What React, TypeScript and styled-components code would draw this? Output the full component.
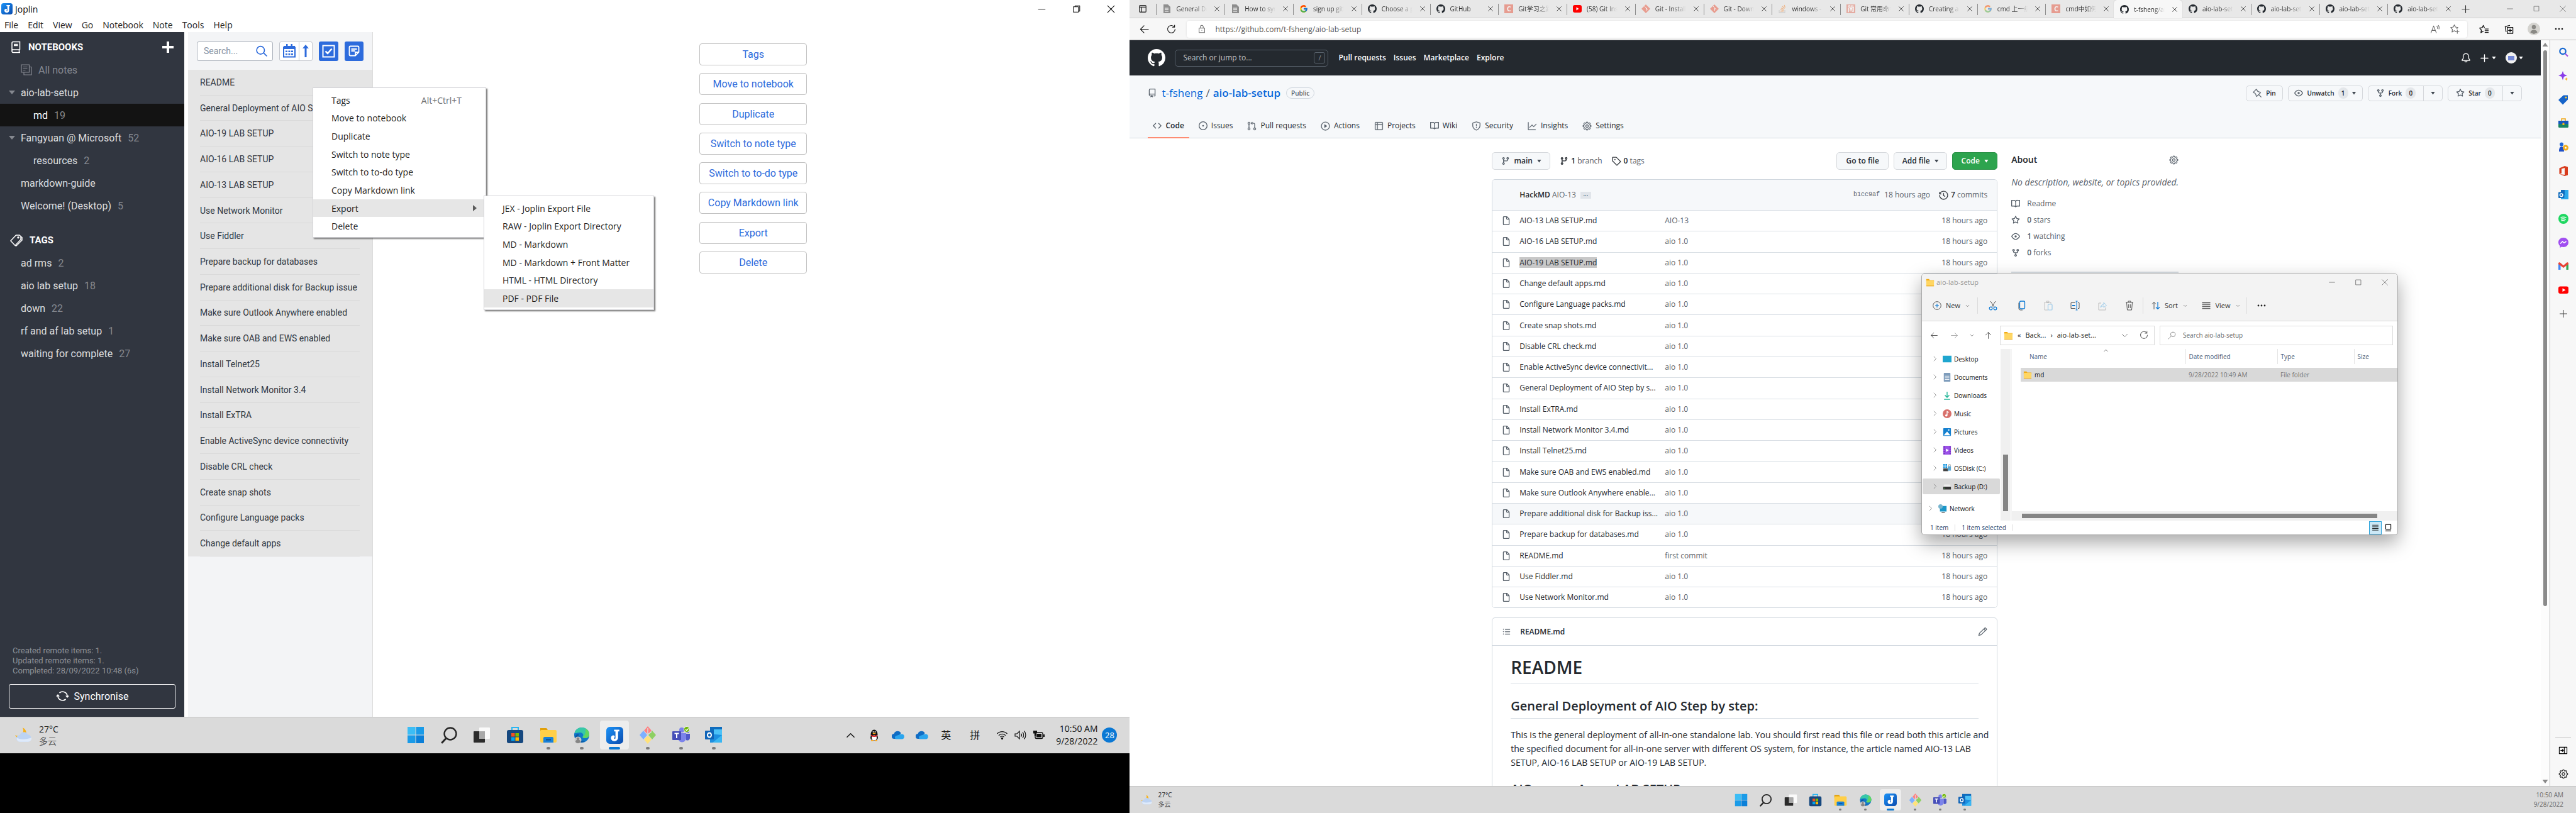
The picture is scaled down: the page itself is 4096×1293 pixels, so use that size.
import React from 'react';
import styled, { createGlobalStyle, css } from 'styled-components';
import {
  GoPin, GoGear, GoTable, GoShield, GoGraph, GoHistory, GoTag, GoPencil, GoListUnordered, GoBell, GoPlay, GoGitPullRequest,
} from 'react-icons/go';
import { FcGoogle } from 'react-icons/fc';

const ui = '"Open Sans", "Noto Sans", "Noto Sans CJK SC", sans-serif';
const roboto = 'Roboto, "Noto Sans CJK SC", sans-serif';

const Global = createGlobalStyle`
  * { box-sizing: border-box; }
  body { margin: 0; background: #000; font-family: ${ui}; }
  button, input { font: inherit; color: inherit; margin: 0; }
  button { border: 0; padding: 0; background: none; }
  a { color: inherit; text-decoration: none; }
  ul, h1, h2, h3, p { margin: 0; padding: 0; list-style: none; }
  svg { display: block; flex: none; }
`;

/* ---------- shared ---------- */

const Screens = styled.div`
  display: grid;
  grid-template-columns: 3000fr 3840fr;
  height: 100vh;
  overflow: hidden;
`;
const LeftScreen = styled.section`
  position: relative;
  aspect-ratio: 3 / 2;
  display: flex;
  flex-direction: column;
  background: #fff;
  min-width: 0;
`;
const RightScreen = styled.section`
  position: relative;
  height: 100vh;
  display: flex;
  flex-direction: column;
  background: #fff;
  min-width: 0;
`;
const Line = ({ d, size = 16, box = 16, w = 1.2, color = 'currentColor' }: { d: string; size?: number; box?: number; w?: number; color?: string }) => (
  <svg width={size} height={size} viewBox={`0 0 ${box} ${box}`} fill="none" stroke={color} strokeWidth={w} strokeLinecap="round" strokeLinejoin="round"><path d={d} /></svg>
);
const Solid = ({ d, size = 14 }: { d: string; size?: number }) => (
  <svg width={size} height={size} viewBox="0 0 16 16" fill="currentColor"><path fillRule="evenodd" d={d} /></svg>
);
const paths = {
  github: 'M8 0C3.58 0 0 3.58 0 8c0 3.54 2.29 6.53 5.47 7.59.4.07.55-.17.55-.38 0-.19-.01-.82-.01-1.49-2.01.37-2.53-.49-2.69-.94-.09-.23-.48-.94-.82-1.13-.28-.15-.68-.52-.01-.53.63-.01 1.08.58 1.23.82.72 1.21 1.87.87 2.33.66.07-.52.28-.87.51-1.07-1.78-.2-3.64-.89-3.64-3.95 0-.87.31-1.59.82-2.15-.08-.2-.36-1.02.08-2.12 0 0 .67-.21 2.2.82.64-.18 1.32-.27 2-.27.68 0 1.36.09 2 .27 1.53-1.04 2.2-.82 2.2-.82.44 1.1.16 1.92.08 2.12.51.56.82 1.27.82 2.15 0 3.07-1.87 3.75-3.65 3.95.29.25.54.73.54 1.48 0 1.07-.01 1.93-.01 2.2 0 .21.15.46.55.38A8.013 8.013 0 0016 8c0-4.42-3.58-8-8-8z',
  repo: 'M2 2.5A2.5 2.5 0 014.5 0h8.75a.75.75 0 01.75.75v12.5a.75.75 0 01-.75.75h-2.5a.75.75 0 110-1.5h1.75v-2h-8a1 1 0 00-.714 1.7.75.75 0 01-1.072 1.05A2.495 2.495 0 012 11.5v-9zm10.5-1V9h-8c-.356 0-.694.074-1 .208V2.5a1 1 0 011-1h8zM5 12.25v3.25a.25.25 0 00.4.2l1.45-1.087a.25.25 0 01.3 0L8.6 15.7a.25.25 0 00.4-.2v-3.25a.25.25 0 00-.25-.25h-3.5a.25.25 0 00-.25.25z',
  code: 'M4.72 3.22a.75.75 0 011.06 1.06L2.06 8l3.72 3.72a.75.75 0 11-1.06 1.06L.47 8.53a.75.75 0 010-1.06l4.25-4.25zm6.56 0a.75.75 0 10-1.06 1.06L13.94 8l-3.72 3.72a.75.75 0 101.06 1.06l4.25-4.25a.75.75 0 000-1.06l-4.25-4.25z',
  issue: 'M8 9.5a1.5 1.5 0 100-3 1.5 1.5 0 000 3zM8 0a8 8 0 100 16A8 8 0 008 0zM1.5 8a6.5 6.5 0 1113 0 6.5 6.5 0 01-13 0z',
  branch: 'M11.75 2.5a.75.75 0 100 1.5.75.75 0 000-1.5zm-2.25.75a2.25 2.25 0 113 2.122V6A2.5 2.5 0 0110 8.5H6a1 1 0 00-1 1v1.128a2.251 2.251 0 11-1.5 0V5.372a2.25 2.25 0 111.5 0v1.836A2.492 2.492 0 016 7h4a1 1 0 001-1v-.628A2.25 2.25 0 019.5 3.25zM4.25 12a.75.75 0 100 1.5.75.75 0 000-1.5zM3.5 3.25a.75.75 0 111.5 0 .75.75 0 01-1.5 0z',
  file: 'M3.75 1.5a.25.25 0 00-.25.25v12.5c0 .138.112.25.25.25h8.5a.25.25 0 00.25-.25V6H9.75A1.75 1.75 0 018 4.25V1.5H3.75zm5.75.56v2.19c0 .138.112.25.25.25h2.19L9.5 2.06zM2 1.75C2 .784 2.784 0 3.75 0h5.086c.464 0 .909.184 1.237.513l3.414 3.414c.329.328.513.773.513 1.237v9.086A1.75 1.75 0 0112.25 16h-8.5A1.75 1.75 0 012 14.25V1.75z',
  star: 'M8 .25a.75.75 0 01.673.418l1.882 3.815 4.21.612a.75.75 0 01.416 1.279l-3.046 2.97.719 4.192a.75.75 0 01-1.088.791L8 12.347l-3.766 1.98a.75.75 0 01-1.088-.79l.72-4.194L.818 6.374a.75.75 0 01.416-1.28l4.21-.611L7.327.668A.75.75 0 018 .25zm0 2.445L6.615 5.5a.75.75 0 01-.564.41l-3.097.45 2.24 2.184a.75.75 0 01.216.664l-.528 3.084 2.769-1.456a.75.75 0 01.698 0l2.77 1.456-.53-3.084a.75.75 0 01.216-.664l2.24-2.183-3.096-.45a.75.75 0 01-.564-.41L8 2.694v.001z',
  fork: 'M5 3.25a.75.75 0 11-1.5 0 .75.75 0 011.5 0zm0 2.122a2.25 2.25 0 10-1.5 0v.878A2.25 2.25 0 005.75 8.5h1.5v2.128a2.251 2.251 0 101.5 0V8.5h1.5a2.25 2.25 0 002.25-2.25v-.878a2.25 2.25 0 10-1.5 0v.878a.75.75 0 01-.75.75h-4.5A.75.75 0 015 6.25v-.878zm3.75 7.378a.75.75 0 11-1.5 0 .75.75 0 011.5 0zm3-8.75a.75.75 0 100-1.5.75.75 0 000 1.5z',
  eye: 'M1.679 7.932c.412-.621 1.242-1.75 2.366-2.717C5.175 4.242 6.527 3.5 8 3.5c1.473 0 2.824.742 3.955 1.715 1.124.967 1.954 2.096 2.366 2.717a.119.119 0 010 .136c-.412.621-1.242 1.75-2.366 2.717C10.825 11.758 9.473 12.5 8 12.5c-1.473 0-2.824-.742-3.955-1.715C2.92 9.818 2.09 8.69 1.679 8.068a.119.119 0 010-.136zM8 2c-1.981 0-3.67.992-4.933 2.078C1.797 5.169.88 6.423.43 7.1a1.619 1.619 0 000 1.798c.45.678 1.367 1.932 2.637 3.024C4.329 13.008 6.019 14 8 14c1.981 0 3.67-.992 4.933-2.078 1.27-1.091 2.187-2.345 2.637-3.023a1.619 1.619 0 000-1.798c-.45-.678-1.367-1.932-2.637-3.023C11.671 2.992 9.981 2 8 2zm0 8a2 2 0 100-4 2 2 0 000 4z',
  book: 'M0 1.75A.75.75 0 01.75 1h4.253c1.227 0 2.317.59 3 1.501A3.744 3.744 0 0111.006 1h4.245a.75.75 0 01.75.75v10.5a.75.75 0 01-.75.75h-4.507a2.25 2.25 0 00-1.591.659l-.622.621a.75.75 0 01-1.06 0l-.622-.621A2.25 2.25 0 005.258 13H.75a.75.75 0 01-.75-.75V1.75zm8.755 3a2.25 2.25 0 012.25-2.25H14.5v9h-3.757c-.71 0-1.4.201-1.992.572l.004-7.322zm-1.504 7.324l.004-5.073-.002-2.253A2.25 2.25 0 005.003 2.5H1.5v9h3.757a3.75 3.75 0 011.994.574z',
};
const go = { size: 15, stroke: 'currentColor', strokeWidth: 0.5 };

const JoplinLogo = ({ size }: { size: number }) => (
  <svg width={size} height={size} viewBox="0 0 24 24">
    <defs><linearGradient id="jop" x1="0" y1="0" x2="1" y2="1"><stop offset="0" stopColor="#1c93f7" /><stop offset="1" stopColor="#0a4bae" /></linearGradient></defs>
    <rect width="24" height="24" rx="5" fill="url(#jop)" />
    <path d="M11 4h7.500v2.400h-1.800v8.800c0 3.100-2.200 5-5.100 5-2.900 0-5-1.800-5-4.400 0-2.200 1.400-3.800 3.400-3.800 1.300 0 2 .8 2 1.800 0 1.200-.9 1.400-.9 2.200 0 .6.400 1 .9 1 .7 0 1-.5 1-1.500V6.400H11z" fill="#fff" />
  </svg>
);
const FolderIcon = ({ size = 14 }: { size?: number }) => (
  <svg width={size} height={size} viewBox="0 0 16 16"><path d="M1 2h5l1.500 2H15v3H1z" fill="#f2ab12" /><rect x="1" y="4.500" width="14" height="10.500" rx=".8" fill="#ffd663" /><path d="M1 14h14v1H1z" fill="#e9a31b" /></svg>
);

/* ---------- taskbar ---------- */

const Bar = styled.footer<{ $small?: boolean }>`
  display: grid;
  grid-template-columns: 1fr auto 1fr;
  align-items: center;
  flex: none;
  height: ${p => (p.$small ? 43 : 58)}px;
  background: #dadada;
  border-top: 1px solid #c6c6c6;
`;
const Weather = styled.div<{ $small?: boolean }>`
  display: flex;
  align-items: center;
  gap: ${p => (p.$small ? 8 : 10)}px;
  padding-left: ${p => (p.$small ? 17 : 22)}px;
  font-size: ${p => (p.$small ? 10 : 14)}px;
  line-height: ${p => (p.$small ? 15 : 19)}px;
  color: #222;
  span + span { color: #555; }
  span { display: block; }
`;
const Apps = styled.div<{ $small?: boolean }>`
  display: grid;
  grid-template-columns: repeat(10, 1fr);
  width: ${p => (p.$small ? 396 : 527)}px;
`;
const AppButton = styled.button<{ $small?: boolean; $active?: boolean }>`
  position: relative;
  justify-self: center;
  display: grid;
  place-items: center;
  width: ${p => (p.$small ? 34 : 46)}px;
  height: ${p => (p.$small ? 34 : 46)}px;
  border-radius: 4px;
  background: ${p => (p.$active ? '#ededed' : 'transparent')};
`;
const RunMark = styled.i<{ $active?: boolean; $small?: boolean }>`
  position: absolute;
  bottom: 0;
  left: 50%;
  width: ${p => (p.$active ? (p.$small ? 12 : 18) : p.$small ? 4 : 6)}px;
  height: ${p => (p.$small ? 3 : 4)}px;
  transform: translateX(-50%);
  border-radius: 2px;
  background: ${p => (p.$active ? '#0a78d4' : '#7b7b7b')};
`;
const Tray = styled.div`
  display: flex;
  justify-content: flex-end;
  align-items: center;
  padding-right: 20px;
  color: #111;
`;
const TrayCell = styled.span<{ $w: number }>`
  display: grid;
  place-items: center;
  width: ${p => p.$w}px;
  font-size: 16px;
  line-height: 20px;
`;
const Clock = styled.time<{ $small?: boolean }>`
  font-size: ${p => (p.$small ? 10 : 14)}px;
  line-height: ${p => (p.$small ? 15 : 20)}px;
  text-align: right;
  padding: ${p => (p.$small ? '0' : '0 7px 0 12px')};
  color: ${p => (p.$small ? '#6b6b6b' : '#111')};
  span { display: block; }
`;
const Badge = styled.span`
  width: 24px;
  height: 24px;
  border-radius: 50%;
  background: #0a78d4;
  color: #fff;
  font-size: 13px;
  line-height: 24px;
  text-align: center;
`;

const CloudMoon = ({ size }: { size: number }) => (
  <svg width={size} height={size} viewBox="0 0 28 28"><path d="M13 3a8 8 0 01-11 11 8.500 8.500 0 1011-11z" fill="#f6b21b" /><path d="M9 24a5 5 0 01-.3-10 6.500 6.500 0 0112-.6A5.400 5.400 0 0121.500 24z" fill="#bcd3f3" /><path d="M9 24a5 5 0 01-4.700-6c4 3 14 3 22 0a5.300 5.300 0 01-4.800 6z" fill="#dfeafa" /></svg>
);
const Edge = () => (<>
  <circle cx="14" cy="14" r="12" fill="#1178c8" />
  <path d="M2.500 11C4 5 9 2 14 2c7 0 12 5 12 10.500 0 4-3 6.500-6.500 6.500-3 0-5-1-4-2.500 2-2.500.5-6.500-4-6.500-4 0-7 1.500-9 1z" fill="#37c8a8" />
  <path d="M20 4c4 2 6 5.500 6 8.500 0 4-3 6.500-6.500 6.500-2.500 0-4.200-.8-4-2 3-1 5-6 4.500-13z" fill="#62d65f" />
  <path d="M9 14c-1 6 4 10 10 10-5 3.500-12 2-15-3-2-4 0-9 6-9-1 .8-1 1.200-1 2z" fill="#0c5aa6" />
</>);
const appDrawings: [string, React.ReactNode, boolean?][] = [
  ['Start', <g fill="#1a9be8"><path d="M1 1h12.500v12.500H1z" fill="#3cbdf5" /><path d="M14.500 1H27v12.500H14.500z" /><path d="M1 14.500h12.500V27H1z" /><path d="M14.500 14.500H27V27H14.500z" fill="#0b7fd8" /></g>],
  ['Search', <g fill="none" stroke="#262626" strokeWidth="2.400"><circle cx="16" cy="12" r="9.500" /><path d="M9.500 19L3 26" strokeWidth="3" strokeLinecap="round" /></g>],
  ['Task view', <g><rect x="10" y="2" width="17" height="18" rx="1" fill="#fafafa" /><rect x="1" y="8" width="18" height="18" rx="1" fill="#2b2b2b" /><path d="M10 8h9v12h-9z" fill="#a9a9a9" /></g>],
  ['Store', <g><path d="M9 7V2h10v5" fill="none" stroke="#29b6f2" strokeWidth="2" /><rect x="1" y="6" width="26" height="21" rx="3" fill="#16487f" /><path d="M8 11h5.500v5.500H8z" fill="#f25022" /><path d="M14.500 11H20v5.500h-5.500z" fill="#7fba00" /><path d="M8 17.500h5.500V23H8z" fill="#00a4ef" /><path d="M14.500 17.500H20V23h-5.500z" fill="#ffb900" /></g>],
  ['File Explorer', <g><path d="M1 3h10l2 3v4H1z" fill="#e2a008" /><rect x="1" y="6" width="26" height="20" rx="2" fill="#ffcf48" /><path d="M6 26v-7q0-2 2-2h12q2 0 2 2v7z" fill="#1881d8" /><path d="M10 21.500h8" stroke="#0c4f93" strokeWidth="2" /></g>, true],
  ['Edge', <g><Edge /><circle cx="8" cy="22" r="5.500" fill="#c9c9c9" /><circle cx="8" cy="20" r="2.300" fill="#858585" /><path d="M4 25a4 3.500 0 018 0 5 5 0 01-8 0z" fill="#858585" /></g>, true],
  ['Joplin', null, true],
  ['Fork', <g><path d="M14 0l6 7-6 6-6-6z" fill="#ff8080" /><path d="M1 14l6-7 6 7-6 7z" fill="#7db0ff" /><path d="M27 14l-6-7-6 7 6 7z" fill="#8ed062" /><path d="M14 28l6-7-6-6-6 6z" fill="#ffe27a" /><path d="M14 3v13M14 13l6-4" stroke="#dadada" strokeWidth="1.500" /></g>, true],
  ['Teams', <g><circle cx="15" cy="6" r="4" fill="#7b83eb" /><circle cx="24" cy="8" r="3" fill="#5059c9" /><path d="M9 11h13v8a6.500 6.500 0 01-13 0z" fill="#7b83eb" /><path d="M22 12h6v7a4 4 0 01-6 3z" fill="#5059c9" /><rect x="0" y="8" width="14" height="14" rx="1" fill="#464eb8" /><path d="M3.500 11.500h7M7 11.500v7.500" stroke="#fff" strokeWidth="2" /><circle cx="23" cy="5" r="4.500" fill="#6bb700" stroke="#eee" strokeWidth="1" /><path d="M21 5l1.700 1.700 3-3.200" stroke="#fff" strokeWidth="1.300" fill="none" /></g>, true],
  ['Outlook', <g><path d="M8 1h19v13H8z" fill="#0f6cbd" /><path d="M14 5h13v9H14z" fill="#4cc2f7" /><path d="M8 12l19 2v12H8z" fill="#1d8fe0" /><path d="M27 14v12H12z" fill="#39b6f2" /><rect x="0" y="7" width="14" height="14" rx="1" fill="#0f64b8" /><ellipse cx="7" cy="14" rx="3" ry="3.500" stroke="#fff" strokeWidth="2" fill="none" /></g>, true],
];
const Taskbar = ({ small }: { small?: boolean }) => (
  <Bar $small={small}>
    <Weather $small={small}>
      <CloudMoon size={small ? 20 : 30} />
      <div><span>27°C</span><span>多云</span></div>
    </Weather>
    <Apps $small={small}>
      {appDrawings.map(([name, art, run]) => (
        <AppButton key={name} aria-label={name} $small={small} $active={name === 'Joplin'}>
          {art ? <svg width={small ? 21 : 28} height={small ? 21 : 28} viewBox="0 0 28 28">{art}</svg> : <JoplinLogo size={small ? 20 : 27} />}
          {run && <RunMark $small={small} $active={name === 'Joplin'} />}
        </AppButton>
      ))}
    </Apps>
    <Tray>
      {!small && (
        <>
          <TrayCell $w={38}><Line d="M2 11l6-6 6 6" size={15} w={1.5} /></TrayCell>
          <TrayCell $w={38}>
            <svg width="18" height="19" viewBox="0 0 18 19"><ellipse cx="9" cy="8" rx="5.500" ry="7.500" fill="#111" /><ellipse cx="9" cy="13" rx="6" ry="5" fill="#111" /><ellipse cx="9" cy="13.500" rx="4" ry="4" fill="#fff" /><path d="M4 8.500q5 3 10 0v2q-5 3-10 0z" fill="#e81c25" /><ellipse cx="9" cy="6.500" rx="2.500" ry="1" fill="#fba61a" /><circle cx="7.500" cy="4" r="1" fill="#fff" /><circle cx="10.500" cy="4" r="1" fill="#fff" /><path d="M4 17h4v1.500H4zM10 17h4v1.500h-4z" fill="#fba61a" /></svg>
          </TrayCell>
          {[0, 1].map(i => (
            <TrayCell $w={38} key={i}><svg width="20" height="14" viewBox="0 0 20 14"><path d="M4 13a4 4 0 01-.5-8A6 6 0 0114.500 4L8 13z" fill="#0f6cc4" /><path d="M6 13.500a4 4 0 010-5l6-2a5 5 0 013.500-1A4 4 0 0116 13.500z" fill="#2aa5ee" /></svg></TrayCell>
          ))}
          <TrayCell $w={38}>英</TrayCell>
          <TrayCell $w={54}>拼</TrayCell>
          <TrayCell $w={32}><svg width="19" height="16" viewBox="0 0 19 16" fill="none" stroke="#111" strokeWidth="1.300"><path d="M1.500 6a11 11 0 0116 0M4 8.800a7.500 7.500 0 0111 0M6.500 11.300a4 4 0 016 0" /><circle cx="9.500" cy="13.500" r="1" fill="#111" /></svg></TrayCell>
          <TrayCell $w={28}><svg width="20" height="16" viewBox="0 0 20 16" fill="none" stroke="#111" strokeWidth="1.200"><path d="M1 6h3l4-4v12l-4-4H1zM10.500 5.500a4 4 0 010 5M13 3.500a7 7 0 010 9M15.500 1.500a10 10 0 010 13" /></svg></TrayCell>
          <TrayCell $w={30}><svg width="20" height="16" viewBox="0 0 20 16"><rect x="4" y="4" width="12" height="9.500" rx="2" fill="none" stroke="#111" strokeWidth="1.300" /><path d="M6 6h8v5.500H6zM17 7h2v4h-2zM1 1h6v4.500H5.200V9H2.800V5.500H1z" fill="#111" /></svg></TrayCell>
        </>
      )}
      <Clock $small={small}><span>10:50 AM</span><span>9/28/2022</span></Clock>
      {!small && <Badge>28</Badge>}
    </Tray>
  </Bar>
);

/* ---------- Joplin ---------- */

const TitleRow = styled.header`
  display: flex;
  align-items: center;
  height: 28px;
  padding: 0 4px 0 2px;
  gap: 4px;
  font-size: 14px;
  color: #111;
`;
const Spacer = styled.span`flex: 1;`;
const WinButton = styled.button<{ $w: number; $color?: string }>`
  display: grid;
  place-items: center;
  width: ${p => p.$w}px;
  height: 100%;
  color: ${p => p.$color || '#111'};
`;
const winPaths = ['M3 8h10', 'M3.500 4.500h7.500v8h-7.500zM6 4.500V3h7v8h-2', 'M3 3l10 10M13 3L3 13'];
const MenuRow = styled.nav`
  display: flex;
  height: 23px;
  padding-left: 7px;
  gap: 15px;
  font-size: 14px;
  line-height: 21px;
  color: #222;
`;
const JoplinBody = styled.div`
  flex: 1;
  min-height: 0;
  display: grid;
  grid-template-columns: 293px 294px 1fr;
  column-gap: 6px;
  background: #fff;
  font-family: ${roboto};
`;
const Side = styled.aside`
  display: flex;
  flex-direction: column;
  background: #313640;
  color: #dcdddf;
  font-size: 16px;
`;
const SideHead = styled.div<{ $top: number }>`
  display: flex;
  align-items: center;
  gap: 11px;
  height: 36px;
  margin-top: ${p => p.$top}px;
  padding: 0 16px;
  color: #fff;
  font-weight: 700;
  font-size: 15px;
  button { margin-left: auto; }
`;
const SideRow = styled.a<{ $in?: boolean; $on?: boolean; $dim?: boolean }>`
  display: flex;
  align-items: center;
  gap: 10px;
  height: 36px;
  padding-left: ${p => (p.$in ? 53 : 14)}px;
  background: ${p => (p.$on ? '#131313' : 'transparent')};
  color: ${p => (p.$dim ? '#858890' : p.$on ? '#fff' : '#dcdddf')};
  small { font-size: 16px; color: #85888f; }
`;
const Twist = styled.i<{ $open?: boolean }>`
  width: 10px;
  height: 6px;
  margin-right: -1px;
  background: ${p => (p.$open ? '#85888f' : 'transparent')};
  clip-path: polygon(0 0, 100% 0, 50% 100%);
`;
const SyncText = styled.p`
  margin: auto 0 13px 20px;
  font-size: 13px;
  line-height: 16px;
  color: #8f9298;
`;
const SyncButton = styled.button`
  display: flex;
  align-items: center;
  justify-content: center;
  gap: 8px;
  height: 39px;
  margin: 0 14px 13px;
  border: 1px solid #fff;
  border-radius: 3px;
  color: #fff;
`;
const Notes = styled.section`
  background: #f3f4f6;
  border-right: 1px solid #dcdcdc;
`;
const NoteTools = styled.div`
  display: flex;
  align-items: center;
  height: 60px;
  padding: 0 14px;
  gap: 10px;
`;
const SearchBox = styled.label`
  display: flex;
  align-items: center;
  width: 121px;
  height: 31px;
  padding: 0 8px 0 10px;
  border: 1px solid #aab1bb;
  border-radius: 3px;
  background: #fff;
  color: #2d6bdc;
  input { flex: 1; min-width: 0; border: 0; padding: 0; background: none; font-size: 14px; }
  input::placeholder { color: #8791a0; opacity: 1; }
`;
const SortPair = styled.div`
  display: grid;
  grid-template-columns: 30px 21px;
  height: 31px;
  border: 1px solid #c4c8ce;
  border-radius: 3px;
  background: #fff;
  color: #2d6bdc;
  button { display: grid; place-items: center; }
  button + button { border-left: 1px solid #c4c8ce; }
`;
const BlueButton = styled.button`
  display: grid;
  place-items: center;
  width: 31px;
  height: 31px;
  border-radius: 3px;
  background: #2d6bdc;
  color: #fff;
`;
const NoteList = styled.ul`
  display: grid;
  grid-auto-rows: 1fr;
  height: 774px;
  background: #e5e5e5;
`;
const NoteItem = styled.li`
  margin: 0 20px 0 19px;
  border-bottom: 1px solid #d9d9d9;
  font-size: 14px;
  color: #32373f;
  white-space: nowrap;
  display: flex;
  align-items: center;
`;
const Multi = styled.main`
  display: flex;
  flex-direction: column;
  justify-content: space-between;
  justify-self: center;
  height: 366px;
  margin-top: 18px;
  button {
    width: 171px;
    height: 35px;
    border: 1px solid #c0c0c0;
    border-radius: 4px;
    background: #fff;
    color: #2d6bdc;
    font-size: 16px;
  }
`;
const Popup = styled.ul<{ $x: number; $y: number; $w: number; $h: number }>`
  position: absolute;
  left: ${p => p.$x}px;
  top: ${p => p.$y}px;
  width: ${p => p.$w}px;
  height: ${p => p.$h}px;
  display: grid;
  grid-auto-rows: 1fr;
  padding: 5px 0 3px;
  border: 1px solid #d4d4d8;
  background: #fff;
  box-shadow: 2px 2px 2px rgba(0, 0, 0, 0.5);
  font-size: 14px;
  color: #1d1d1d;
  button {
    display: flex;
    align-items: center;
    justify-content: space-between;
    width: 100%;
    height: 100%;
    padding: 0 38px 0 29px;
    white-space: nowrap;
  }
  kbd { font: inherit; color: #6e6e6e; }
`;
const PopupItem = styled.li<{ $on?: boolean }>`
  position: relative;
  background: ${p => (p.$on ? '#e6e6e6' : 'transparent')};
`;
const SubArrow = styled.i`
  position: absolute;
  right: 14px;
  top: 50%;
  margin-top: -5px;
  width: 6px;
  height: 10px;
  background: #5c5c5c;
  clip-path: polygon(0 0, 100% 50%, 0 100%);
`;
const noteNames = ['README', 'General Deployment of AIO Step by step', 'AIO-19 LAB SETUP', 'AIO-16 LAB SETUP', 'AIO-13 LAB SETUP', 'Use Network Monitor', 'Use Fiddler', 'Prepare backup for databases', 'Prepare additional disk for Backup issue', 'Make sure Outlook Anywhere enabled', 'Make sure OAB and EWS enabled', 'Install Telnet25', 'Install Network Monitor 3.4', 'Install ExTRA', 'Enable ActiveSync device connectivity', 'Disable CRL check', 'Create snap shots', 'Configure Language packs', 'Change default apps'];
const actions = ['Tags', 'Move to notebook', 'Duplicate', 'Switch to note type', 'Switch to to-do type', 'Copy Markdown link', 'Export', 'Delete'];
const exportsTo = ['JEX - Joplin Export File', 'RAW - Joplin Export Directory', 'MD - Markdown', 'MD - Markdown + Front Matter', 'HTML - HTML Directory', 'PDF - PDF File'];

const Joplin = () => (
  <>
    <TitleRow>
      <JoplinLogo size={18} />Joplin<Spacer />
      {winPaths.map(d => <WinButton key={d} $w={51}><Line d={d} size={17} w={1} /></WinButton>)}
    </TitleRow>
    <MenuRow>{['File', 'Edit', 'View', 'Go', 'Notebook', 'Note', 'Tools', 'Help'].map(m => <button key={m}>{m}</button>)}</MenuRow>
    <JoplinBody>
      <Side>
        <SideHead $top={6}>
          <svg width="18" height="20" viewBox="0 0 18 20" fill="none" stroke="#fff" strokeWidth="1.500"><path d="M15.500 14V1.500H5Q3 1.500 3 3.500V17M15.500 14H5q-2 0-2 2.200T5 18.500h11M14.500 14v4.500M6 5.500h6.500M6 7.500h6.500" /></svg>
          NOTEBOOKS
          <button aria-label="New notebook"><svg width="20" height="20" viewBox="0 0 20 20" fill="#fff"><path d="M8 1h4v7h7v4h-7v7H8v-7H1V8h7z" /></svg></button>
        </SideHead>
        <SideRow href="#" $dim>
          <Twist />
          <svg width="18" height="18" viewBox="0 0 18 18" fill="none" stroke="currentColor" strokeWidth="1.200"><path d="M1 1h12.500v12H1zM14 4.500h3V17H5v-3.500M3.500 4.500h7M3.500 7h7M3.500 9.500h4" /></svg>
          All notes
        </SideRow>
        <SideRow href="#"><Twist $open />aio-lab-setup</SideRow>
        <SideRow href="#" $in $on>md <small>19</small></SideRow>
        <SideRow href="#"><Twist $open />Fangyuan @ Microsoft <small>52</small></SideRow>
        <SideRow href="#" $in>resources <small>2</small></SideRow>
        <SideRow href="#"><Twist />markdown-guide</SideRow>
        <SideRow href="#"><Twist />Welcome! (Desktop) <small>5</small></SideRow>
        <SideHead $top={19}>
          <svg width="20" height="20" viewBox="0 0 20 20" fill="none" stroke="#fff" strokeWidth="1.500"><path d="M1 11l8.500-9H15l2 2v5l-9 9.500zM17 4l2 1.500V10L10 19l-2-.5" /><circle cx="13" cy="5.800" r="1" fill="#fff" /></svg>
          TAGS
        </SideHead>
        {[['ad rms', 2], ['aio lab setup', 18], ['down', 22], ['rf and af lab setup', 1], ['waiting for complete', 27]].map(([n, c]) => (
          <SideRow href="#" key={n}><Twist />{n} <small>{c}</small></SideRow>
        ))}
        <SyncText>Created remote items: 1.<br />Updated remote items: 1.<br />Completed: 28/09/2022 10:48 (6s)</SyncText>
        <SyncButton>
          <svg width="21" height="18" viewBox="0 0 21 18" fill="none" stroke="#fff" strokeWidth="1.700"><path d="M5.500 4a7.500 7.500 0 0112.500 5.500M15.500 14A7.500 7.500 0 013 8.500" /><path d="M0 9.500h6L3 6zM15 8.500h6l-3 3.500z" fill="#fff" stroke="none" /></svg>
          Synchronise
        </SyncButton>
      </Side>
      <Notes>
        <NoteTools>
          <SearchBox><input aria-label="Search notes" placeholder="Search..." /><Line d="M11 11l4 4M6.500 1.500a5.500 5.500 0 100 11 5.500 5.500 0 100-11" size={18} w={1.5} /></SearchBox>
          <SortPair>
            <button aria-label="Sort by date"><svg width="20" height="22" viewBox="0 0 20 22"><path d="M1 5.500h18v15H1z" fill="none" stroke="currentColor" strokeWidth="2" /><path d="M1 3h18v5H1zM5 0h2.500v4H5zM12.500 0H15v4h-2.500z" fill="currentColor" /><path d="M4 10.500h3v2.500H4zm4.500 0h3v2.500h-3zm4.500 0h3v2.500h-3zM4 15h3v2.500H4zm4.500 0h3v2.500h-3zm4.500 0h3v2.500h-3z" fill="currentColor" /></svg></button>
            <button aria-label="Reverse order"><svg width="12" height="20" viewBox="0 0 12 20" fill="currentColor"><path d="M6 0l5 6H7.500v14h-3V6H1z" /></svg></button>
          </SortPair>
          <BlueButton aria-label="New to-do"><svg width="21" height="21" viewBox="0 0 21 21" fill="none" stroke="#fff" strokeWidth="2"><path d="M1.500 1.500h18v18h-18z" /><path d="M5.500 10.500l3.500 3.500 6.500-7.500" strokeWidth="2.500" /></svg></BlueButton>
          <BlueButton aria-label="New note"><svg width="18" height="18" viewBox="0 0 18 18" fill="none" stroke="#fff" strokeWidth="1.800"><path d="M3 1.500h12q1.500 0 1.500 1.500v8l-5.500 5.500H3Q1.500 16.500 1.500 15V3Q1.500 1.500 3 1.500zM11 16v-5h5M4.500 6h9M4.500 9h6" /></svg></BlueButton>
        </NoteTools>
        <NoteList>{noteNames.map(n => <NoteItem key={n}>{n}</NoteItem>)}</NoteList>
      </Notes>
      <Multi>{actions.map(a => <button key={a}>{a}</button>)}</Multi>
    </JoplinBody>
    <Popup $x={497} $y={139} $w={276} $h={239}>
      {actions.map(a => (
        <PopupItem key={a} $on={a === 'Export'}><button>{a}{a === 'Tags' && <kbd>Alt+Ctrl+T</kbd>}</button>{a === 'Export' && <SubArrow />}</PopupItem>
      ))}
    </Popup>
    <Popup $x={769} $y={311} $w={271} $h={182}>
      {exportsTo.map(a => <PopupItem key={a} $on={a.startsWith('PDF')}><button>{a}</button></PopupItem>)}
    </Popup>
  </>
);

/* ---------- browser chrome ---------- */

const TabStrip = styled.header`
  display: flex;
  flex: none;
  height: 29px;
  background: #e8e8e8;
  border-bottom: 1px solid #cfcfcf;
`;
const StripButton = styled.button<{ $w: number }>`
  display: grid;
  place-items: center;
  width: ${p => p.$w}px;
  color: #333;
`;
const Gap = styled.span<{ $w: number }>`
  flex: none;
  width: ${p => p.$w}px;
`;
const Tabs = styled.div`
  flex: 1;
  display: flex;
  min-width: 0;
`;
const Tab = styled.div<{ $on?: boolean; $dim?: boolean }>`
  flex: 1 1 0;
  min-width: 0;
  display: flex;
  align-items: center;
  padding: 0 6px 0 10px;
  gap: 8px;
  font-size: 10px;
  line-height: 16px;
  color: #333;
  position: relative;
  &::before {
    content: '';
    position: absolute;
    left: 0;
    top: 6px;
    height: 18px;
    width: 1px;
    background: ${p => (p.$on ? 'transparent' : '#8d8d8d')};
  }
  ${p => p.$on && css`
    height: 29px;
    background: #f7f7f7;
    border-radius: 5px 5px 0 0;
    box-shadow: 0 0 1px #999;
    & + div::before { background: transparent; }
  `}
  > span:first-child { opacity: ${p => (p.$dim ? 0.5 : 1)}; }
`;
const TabName = styled.button`
  flex: 1;
  min-width: 0;
  overflow: hidden;
  white-space: nowrap;
  text-align: left;
  mask-image: linear-gradient(to right, #000 60%, transparent 96%);
`;
const Fav = styled.span<{ $bg?: string }>`
  display: grid;
  place-items: center;
  flex: none;
  width: 14px;
  height: 14px;
  background: ${p => p.$bg || 'transparent'};
  color: ${p => (p.$bg ? '#fff' : '#24292f')};
  font-size: 11px;
  line-height: 14px;
  font-weight: 700;
`;
const AddressRow = styled.div`
  display: flex;
  align-items: center;
  flex: none;
  height: 35px;
  background: #f7f7f7;
  border-bottom: 1px solid #bdbdbd;
`;
const AddressButton = styled.button<{ $w?: number }>`
  display: grid;
  place-items: center;
  width: ${p => p.$w || 40}px;
  color: #111;
`;
const Url = styled.label`
  flex: 1;
  display: flex;
  align-items: center;
  height: 27px;
  margin: 0 6px 0 5px;
  padding: 0 4px 0 17px;
  border-radius: 4px;
  background: #fff;
  box-shadow: 0 0 3px rgba(0, 0, 0, 0.12);
  color: #6a6a6a;
  input { flex: 1; border: 0; padding: 0 0 0 14px; background: none; font-size: 12px; color: #555; }
  button { color: #6a6a6a; }
`;
const Profile = styled.span`
  display: grid;
  place-items: center;
  width: 20px;
  height: 20px;
  border-radius: 50%;
  background: #d4d3cf;
`;
const BrowserBody = styled.div`
  flex: 1;
  min-height: 0;
  display: flex;
  background: #fff;
`;
const Scroll = styled.div`
  display: flex;
  flex-direction: column;
  align-items: center;
  width: 14px;
  padding: 4px 0;
  background: #fcfcfc;
`;
const ScrollEnd = styled.i<{ $down?: boolean }>`
  width: 9px;
  height: 6px;
  background: #8a8a8a;
  clip-path: ${p => (p.$down ? 'polygon(0 0, 100% 0, 50% 100%)' : 'polygon(50% 0, 100% 100%, 0 100%)')};
`;
const ScrollThumb = styled.i`
  width: 6px;
  flex: 0 0 75%;
  margin: 6px 0 auto;
  border-radius: 3px;
  background: #8a8a8a;
`;
const Rail = styled.aside`
  width: 42px;
  display: flex;
  flex-direction: column;
  background: #f7f7f7;
  border-left: 1px solid #bdbdbd;
`;
const RailTop = styled.div`
  display: grid;
  grid-auto-rows: 1fr;
  height: 454px;
  button { display: grid; place-items: center; }
`;
const RailEnd = styled.div`
  display: grid;
  grid-auto-rows: 38px;
  margin: auto 8px 0;
  border-top: 1px solid #bdbdbd;
  button { display: grid; place-items: center; }
`;
const doc = <svg width="12" height="14" viewBox="0 0 12 14"><path d="M1 0h7l4 4v10H1z" fill="#8e8e8e" /><path d="M3 6h6M3 8.500h6M3 11h6" stroke="#fff" /></svg>;
const gh = <Solid d={paths.github} size={14} />;
const yt = <svg width="14" height="12" viewBox="0 0 14 12"><rect width="14" height="12" rx="3" fill="#f00" /><path d="M5.500 3.500v5l4-2.500z" fill="#fff" /></svg>;
const git = <svg width="14" height="14" viewBox="0 0 14 14"><path d="M7 0l7 7-7 7-7-7z" fill="#e8543a" /><path d="M5 3l2.500 2.500V10M7.500 6L10 8" stroke="#fff" fill="none" /></svg>;
const so = <svg width="12" height="14" viewBox="0 0 12 14" fill="none"><path d="M1 9v4h9V9" stroke="#bbb" strokeWidth="1.300" /><path d="M3 11h5M3 8.500l5 .8M4 5.800l4.500 2M6 3l3.500 3.500M9 1l1.500 4" stroke="#f48024" strokeWidth="1.200" /></svg>;
const tabData: [React.ReactNode, string, boolean?, string?][] = [
  [doc, 'General Deployment'], [doc, 'How to sync notes'], [<FcGoogle size={14} />, 'sign up github'], [gh, 'Choose a plan'], [gh, 'GitHub'],
  ['C', 'Git学习之路', true, '#e5533a'], [yt, '(58) Git Install'], [git, 'Git - Installing', true], [git, 'Git - Downloads', true], [so, 'windows - How', true],
  ['简', 'Git 常用命令', true, '#e2705c'], [gh, 'Creating a repo'], [<FcGoogle size={14} />, 'cmd 上一级目录', true], ['C', 'cmd中如何返回', true, '#e5533a'],
  [gh, 't-fsheng/aio-lab'], [gh, 'aio-lab-setup'], [gh, 'aio-lab-setup'], [gh, 'aio-lab-setup'], [gh, 'aio-lab-setup'],
];
const railArt: [string, React.ReactNode][] = [
  ['Search', <g fill="none" strokeWidth="2.200"><circle cx="7" cy="6.500" r="4.700" stroke="#1769d2" /><path d="M11 10.500l4 4" stroke="#9a4de0" /></g>],
  ['Discover', <g><path d="M7 0l1.800 5L14 7l-5.200 2L7 14.500 5.200 9 0 7l5.200-2z" fill="#8a3ce8" /><path d="M12.500 10l.8 2 2 .8-2 .8-.8 2-.8-2-2-.8 2-.8z" fill="#f3ab12" /></g>],
  ['Shopping', <g><path d="M8 .5h7v7l-8 8L0 8z" fill="#1563c9" /><circle cx="12" cy="4" r="1.600" fill="#fc3" /></g>],
  ['Tools', <g><path d="M5 4V1h6v3" stroke="#f0a818" fill="none" strokeWidth="1.600" /><rect x="0" y="4" width="16" height="11" rx="1.500" fill="#188463" /><path d="M0 4h16v5H0z" fill="#1457bd" /><rect x="6.500" y="7.500" width="3" height="3.500" fill="#fbb018" /></g>],
  ['Games', <g><circle cx="5" cy="3.500" r="3" fill="#1f66d8" /><path d="M1 15q0-8 4-8t4 8z" fill="#1f50c8" /><circle cx="11.500" cy="9" r="4.500" fill="#f2ad1c" /><circle cx="11.500" cy="9" r="1.500" fill="#fff" /></g>],
  ['Office', <g><path d="M10 0l5 1.500v13L10 16l-8-3 8 1V3L5 4.500v7L1.500 13V3.500z" fill="#d83b1c" /></g>],
  ['Outlook', <g><path d="M4 0h12v15H4z" fill="#2aa8ea" /><path d="M4 0h6v8H4z" fill="#0f6cbd" /><rect y="3.500" width="9.500" height="9.500" rx="1" fill="#0f6cbd" /><circle cx="4.700" cy="8.200" r="2.300" fill="none" stroke="#fff" strokeWidth="1.500" /></g>],
  ['Spotify', <g><circle cx="8" cy="8" r="8" fill="#1ed760" /><path d="M3.500 5.800q5-1.500 9.200.7M4 8.500q4.300-1.200 7.700.6M4.500 11q3.500-.9 6.300.5" stroke="#fff" fill="none" strokeWidth="1.300" /></g>],
  ['Messenger', <g><path d="M8 0c4.600 0 8 3.200 8 7.500S12.600 15 8 15c-1 0-2-.2-2.800-.5L2.500 16v-3C.9 11.700 0 9.700 0 7.500 0 3.200 3.400 0 8 0z" fill="#a04df0" /><path d="M3 9.500l3.500-3.500L9 8.300 12.500 6" stroke="#fff" fill="none" strokeWidth="1.500" /></g>],
  ['Gmail', <g><path d="M0 3h3.500v11H0z" fill="#4285f4" /><path d="M12.500 3H16v11h-3.500z" fill="#34a853" /><path d="M0 3l2-1 6 5 6-5 2 1v2l-8 6-8-6z" fill="#ea4335" /></g>],
  ['YouTube', <g><rect y="2.500" width="16" height="11.500" rx="3" fill="#f00" /><path d="M6.500 5.500v5.500l5-2.750z" fill="#fff" /></g>],
  ['Add', <path d="M8 2v12M2 8h12" stroke="#444" />],
];

/* ---------- GitHub ---------- */

const Page = styled.div`
  flex: 1;
  min-width: 0;
  overflow: hidden;
  color: #24292f;
  font-size: 12px;
  line-height: 18px;
`;
const GhHeader = styled.header`
  display: flex;
  align-items: center;
  height: 56px;
  padding: 0 28px 0 29px;
  background: #24292f;
  color: #fff;
`;
const GhSearch = styled.label`
  display: flex;
  align-items: center;
  width: 244px;
  height: 27px;
  margin: 0 16px 0 15px;
  padding: 0 4px 0 12px;
  border: 1px solid #57606a;
  border-radius: 5px;
  input { flex: 1; min-width: 0; border: 0; padding: 0; background: none; }
  input::placeholder { color: #c3c6ca; opacity: 1; }
  kbd { width: 18px; height: 18px; border: 1px solid #57606a; border-radius: 3px; font: 11px/16px ${ui}; text-align: center; color: #8b929a; }
`;
const GhLinks = styled.nav`
  flex: 1;
  display: flex;
  gap: 12px;
  font-weight: 600;
`;
const Caret = styled.i<{ $color?: string; $left?: number }>`
  width: 7px;
  height: 5px;
  margin-left: ${p => p.$left || 0}px;
  background: ${p => p.$color || '#424a53'};
  clip-path: polygon(0 0, 100% 0, 50% 100%);
`;
const Avatar = styled.span`
  display: grid;
  place-items: center;
  width: 18px;
  height: 18px;
  margin-left: 15px;
  border-radius: 50%;
  background: #f0f0f0;
  &::after { content: ''; width: 10px; height: 7px; background: #7387d6; }
`;
const RepoHead = styled.div`
  height: 100px;
  padding: 14px 30px 0 29px;
  background: #f6f8fa;
  border-bottom: 1px solid #d0d7de;
`;
const RepoTitle = styled.div`
  display: flex;
  align-items: center;
  gap: 8px;
  height: 28px;
  color: #57606a;
`;
const RepoName = styled.h1`
  flex: 1;
  display: flex;
  align-items: center;
  gap: 5px;
  font-size: 17px;
  line-height: 24px;
  font-weight: 400;
  a { color: #0969da; }
  a + span + a { font-weight: 600; }
  em { margin-left: 4px; padding: 0 7px; border: 1px solid #d0d7de; border-radius: 9px; font: normal 600 10px/16px ${ui}; color: #57606a; }
`;
const SmallButton = styled.div<{ $w: number }>`
  display: flex;
  align-items: stretch;
  width: ${p => p.$w}px;
  height: 25px;
  border: 1px solid #d5d8dc;
  border-radius: 5px;
  font-size: 10px;
  font-weight: 600;
  color: #24292f;
  svg { color: #57606a; }
  b { min-width: 16px; height: 18px; border-radius: 9px; background: #e4e7ea; text-align: center; line-height: 18px; font-weight: 600; }
  button { flex: 1; display: flex; align-items: center; justify-content: center; gap: 6px; }
  button + button { flex: 0 0 30px; border-left: 1px solid #d5d8dc; }
`;
const RepoNav = styled.nav`
  display: flex;
  gap: 7px;
  height: 38px;
  margin-top: 20px;
`;
const RepoTab = styled.a<{ $on?: boolean }>`
  display: flex;
  align-items: center;
  gap: 6px;
  height: 38px;
  padding: 0 8px;
  font-weight: ${p => (p.$on ? 600 : 400)};
  border-bottom: 2px solid ${p => (p.$on ? '#fd8c73' : 'transparent')};
  svg { color: #57606a; }
`;
const Content = styled.div`
  display: grid;
  grid-template-columns: minmax(0, 1fr) 266px;
  column-gap: 22px;
  max-width: 1092px;
  margin: 0 auto;
  padding-top: 22px;
`;
const FileBar = styled.div`
  display: flex;
  align-items: center;
  gap: 8px;
  height: 28px;
  color: #57606a;
  strong { color: #24292f; font-weight: 600; }
`;
const Btn = styled.button<{ $green?: boolean; $w: number }>`
  display: flex;
  align-items: center;
  justify-content: center;
  gap: 7px;
  width: ${p => p.$w}px;
  height: 28px;
  border: 1px solid ${p => (p.$green ? '#2a9147' : '#d5d8dc')};
  border-radius: 5px;
  background: ${p => (p.$green ? '#2da44e' : '#f6f8fa')};
  color: ${p => (p.$green ? '#fff' : '#24292f')};
  font-weight: 600;
  svg { color: #57606a; }
`;
const Stat = styled.a`
  display: flex;
  align-items: center;
  gap: 4px;
  margin-left: 7px;
  svg { color: #24292f; }
`;
const Box = styled.section`
  margin-top: 15px;
  border: 1px solid #d0d7de;
  border-radius: 5px;
  overflow: hidden;
`;
const CommitRow = styled.header`
  display: flex;
  align-items: center;
  gap: 7px;
  height: 48px;
  padding: 0 15px 0 43px;
  background: #f6f8fa;
  color: #57606a;
  strong { color: #24292f; font-weight: 600; }
  code { font: 10px/16px "Liberation Mono", monospace; }
  em { width: 17px; height: 11px; background: #e1e5ea; color: #24292f; font-style: normal; font-size: 10px; line-height: 7px; text-align: center; }
  svg { color: #24292f; margin: 0 -3px 0 7px; }
`;
const Files = styled.table`
  width: 100%;
  height: 632px;
  border-collapse: collapse;
  table-layout: fixed;
  td { padding: 0; border-top: 1px solid #d8dee4; white-space: nowrap; color: #57606a; }
  td:nth-child(1) { width: 43px; padding-left: 15px; }
  td:nth-child(2) { width: 231px; color: #24292f; }
  td:nth-child(4) { width: 120px; padding-right: 15px; text-align: right; }
`;
const FileLink = styled.a<{ $sel?: boolean }>`
  background: ${p => (p.$sel ? '#c8c8c8' : 'transparent')};
`;
const FileRow = styled.tr<{ $hover?: boolean }>`
  background: ${p => (p.$hover ? '#f6f8fa' : '#fff')};
`;
const ReadmeHead = styled.header`
  display: flex;
  align-items: center;
  gap: 14px;
  height: 44px;
  padding: 0 15px;
  border-bottom: 1px solid #d0d7de;
  font-weight: 600;
  svg { color: #57606a; }
`;
const Article = styled.article`
  padding: 16px 29px 40px;
  white-space: nowrap;
  h1 { padding-bottom: 7px; border-bottom: 1px solid #d8dee4; font-size: 28px; line-height: 36px; font-weight: 600; }
  h2 { margin-top: 23px; padding-bottom: 6px; border-bottom: 1px solid #d8dee4; font-size: 20px; line-height: 26px; font-weight: 600; }
  p { margin-top: 15px; font-size: 14px; line-height: 22px; }
  p + h2 { margin-top: 18px; }
`;
const About = styled.aside`
  h2 { display: flex; justify-content: space-between; align-items: center; font-size: 14px; line-height: 24px; font-weight: 600; }
  h2 svg { color: #57606a; }
  p { margin: 13px 0 10px; font-size: 14px; line-height: 22px; font-style: italic; color: #57606a; white-space: nowrap; }
  ul { padding-bottom: 17px; border-bottom: 2px solid #d8dee4; }
  li { display: flex; align-items: center; gap: 11px; height: 26px; color: #57606a; }
  li b { font-weight: 600; }
`;
const files: [string, string][] = [
  ['AIO-13 LAB SETUP.md', 'AIO-13'], ['AIO-16 LAB SETUP.md', ''], ['AIO-19 LAB SETUP.md', ''], ['Change default apps.md', ''], ['Configure Language packs.md', ''], ['Create snap shots.md', ''], ['Disable CRL check.md', ''],
  ['Enable ActiveSync device connectivit...', ''], ['General Deployment of AIO Step by s...', ''], ['Install ExTRA.md', ''], ['Install Network Monitor 3.4.md', ''], ['Install Telnet25.md', ''], ['Make sure OAB and EWS enabled.md', ''],
  ['Make sure Outlook Anywhere enable...', ''], ['Prepare additional disk for Backup iss...', ''], ['Prepare backup for databases.md', ''], ['README.md', 'first commit'], ['Use Fiddler.md', ''], ['Use Network Monitor.md', ''],
];
const repoTabs: [React.ReactNode, string][] = [
  [<Solid d={paths.code} />, 'Code'], [<Solid d={paths.issue} />, 'Issues'], [<GoGitPullRequest {...go} />, 'Pull requests'], [<GoPlay {...go} />, 'Actions'], [<GoTable {...go} />, 'Projects'], [<Solid d={paths.book} />, 'Wiki'], [<GoShield {...go} />, 'Security'], [<GoGraph {...go} />, 'Insights'], [<GoGear {...go} />, 'Settings'],
];

const GitHub = () => (
  <Page>
    <GhHeader>
      <Solid d={paths.github} size={28} />
      <GhSearch><input aria-label="Search GitHub" placeholder="Search or jump to..." /><kbd>/</kbd></GhSearch>
      <GhLinks>{['Pull requests', 'Issues', 'Marketplace', 'Explore'].map(l => <a href="#" key={l}>{l}</a>)}</GhLinks>
      <GoBell size={16} stroke="currentColor" strokeWidth={0.5} />
      <Gap $w={14} />
      <Line d="M8 2v12M2 8h12" size={15} w={1.5} />
      <Caret $color="#fff" $left={4} />
      <Avatar />
      <Caret $color="#fff" $left={3} />
    </GhHeader>
    <RepoHead>
      <RepoTitle>
        <Solid d={paths.repo} size={14} />
        <RepoName><a href="#">t-fsheng</a><span>/</span><a href="#">aio-lab-setup</a><em>Public</em></RepoName>
        <SmallButton $w={59}><button><GoPin {...go} />Pin</button></SmallButton>
        <SmallButton $w={119}><button><Solid d={paths.eye} />Unwatch<b>1</b><Caret /></button></SmallButton>
        <SmallButton $w={119}><button><Solid d={paths.fork} />Fork<b>0</b></button><button aria-label="Fork options"><Caret /></button></SmallButton>
        <SmallButton $w={118}><button><Solid d={paths.star} />Star<b>0</b></button><button aria-label="Star lists"><Caret /></button></SmallButton>
      </RepoTitle>
      <RepoNav>{repoTabs.map(([i, n]) => <RepoTab href="#" key={n} $on={n === 'Code'}>{i}{n}</RepoTab>)}</RepoNav>
    </RepoHead>
    <Content>
      <div>
        <FileBar>
          <Btn $w={93}><Solid d={paths.branch} />main<Caret /></Btn>
          <Stat href="#"><Solid d={paths.branch} /><span><strong>1</strong> branch</span></Stat>
          <Stat href="#"><GoTag {...go} /><span><strong>0</strong> tags</span></Stat>
          <Spacer />
          <Btn $w={83}>Go to file</Btn>
          <Btn $w={85}>Add file<Caret /></Btn>
          <Btn $w={72} $green>Code<Caret $color="#fff" /></Btn>
        </FileBar>
        <Box>
          <CommitRow><span><strong>HackMD</strong> AIO-13</span><em>...</em><Spacer /><code>b1cc9af</code><span>18 hours ago</span><GoHistory {...go} /><span><strong>7</strong> commits</span></CommitRow>
          <Files><tbody>
            {files.map(([n, m]) => (
              <FileRow key={n} $hover={n.startsWith('Prepare additional')}>
                <td><Solid d={paths.file} /></td>
                <td><FileLink href="#" $sel={n.startsWith('AIO-19')}>{n}</FileLink></td>
                <td>{m || 'aio 1.0'}</td>
                <td>18 hours ago</td>
              </FileRow>
            ))}
          </tbody></Files>
        </Box>
        <Box>
          <ReadmeHead><GoListUnordered {...go} />README.md<Spacer /><GoPencil {...go} /></ReadmeHead>
          <Article>
            <h1>README</h1>
            <h2>General Deployment of AIO Step by step:</h2>
            <p>This is the general deployment of all-in-one standalone lab. You should first read this file or read both this article and<br />the specified document for all-in-one server with different OS system, for instance, the article named AIO-13 LAB<br />SETUP, AIO-16 LAB SETUP or AIO-19 LAB SETUP.</p>
            <h2>AIO server Azure LAB SETUP</h2>
          </Article>
        </Box>
      </div>
      <About>
        <h2>About<GoGear {...go} /></h2>
        <p>No description, website, or topics provided.</p>
        <ul>
          <li><Solid d={paths.book} />Readme</li>
          <li><Solid d={paths.star} /><span><b>0</b> stars</span></li>
          <li><Solid d={paths.eye} /><span><b>1</b> watching</span></li>
          <li><Solid d={paths.fork} /><span><b>0</b> forks</span></li>
        </ul>
      </About>
    </Content>
  </Page>
);

/* ---------- file explorer ---------- */

const Explorer = styled.section`
  position: absolute;
  right: 283px;
  top: 435px;
  width: 758px;
  height: 416px;
  display: flex;
  flex-direction: column;
  border: 1px solid #aaa;
  border-radius: 5px;
  overflow: hidden;
  background: #fff;
  box-shadow: 0 12px 30px rgba(0, 0, 0, 0.35);
  font-size: 11px;
  line-height: 16px;
  color: #111;
`;
const ExTitle = styled.header`
  display: flex;
  align-items: center;
  gap: 3px;
  height: 26px;
  padding: 0 1px 0 6px;
  background: #f3f3f3;
  color: #999;
`;
const ExCommands = styled.div`
  display: flex;
  align-items: center;
  height: 49px;
  background: #f3f3f3;
  border-bottom: 1px solid #dadada;
  color: #333;
`;
const ExCommand = styled.button<{ $w: number }>`
  display: flex;
  align-items: center;
  justify-content: center;
  gap: 7px;
  width: ${p => p.$w}px;
  height: 28px;
`;
const ExRule = styled.i<{ $h?: number }>`
  width: 1px;
  height: ${p => p.$h || 26}px;
  background: #dcdcdc;
`;
const ExAddress = styled.div`
  display: flex;
  align-items: center;
  height: 44px;
  padding: 0 7px 0 3px;
  color: #555;
`;
const ExPath = styled.div`
  display: flex;
  align-items: center;
  gap: 7px;
  width: 246px;
  height: 31px;
  margin: 0 8px 0 4px;
  padding: 0 9px 0 5px;
  border: 1px solid #dcdcdc;
  color: #111;
  svg { color: #666; }
`;
const ExSearch = styled.label`
  flex: 1;
  display: flex;
  align-items: center;
  gap: 11px;
  height: 31px;
  padding-left: 12px;
  border: 1px solid #dcdcdc;
  color: #888;
  input { flex: 1; border: 0; padding: 0; background: none; font-size: 10px; }
  input::placeholder { color: #666; opacity: 1; }
`;
const ExBody = styled.div`
  flex: 1;
  min-height: 0;
  display: grid;
  grid-template-columns: 125px 16px 1fr;
`;
const ExTree = styled.ul`
  padding: 3px 1px;
  font-size: 10px;
`;
const ExNode = styled.li<{ $on?: boolean; $root?: boolean }>`
  display: flex;
  align-items: center;
  gap: 4px;
  height: 25px;
  margin-bottom: 4px;
  ${p => p.$root && 'margin-top: 10px;'}
  padding-left: ${p => (p.$root ? 7 : 14)}px;
  border-radius: 2px;
  background: ${p => (p.$on ? '#d9d9d9' : 'transparent')};
  white-space: nowrap;
  svg + svg { margin-left: 3px; }
`;
const ExScroll = styled.div`
  background: #f0f0f0;
  padding: 168px 4px 15px;
  &::after { content: ''; display: block; height: 100%; background: #858585; }
`;
const ExPane = styled.div`
  display: flex;
  flex-direction: column;
  border-left: 1px solid #f3f3f3;
  margin-left: 1px;
  overflow: hidden;
`;
const ExTable = styled.table`
  width: calc(100% - 14px);
  margin-left: 14px;
  border-collapse: collapse;
  table-layout: fixed;
  th { position: relative; height: 27px; padding: 0 0 0 5px; border-right: 1px solid #e4e4e4; text-align: left; font-size: 10px; font-weight: 400; color: #4c607a; }
  th:first-child { width: 262px; padding-left: 14px; }
  th:nth-child(2) { width: 146px; }
  th:nth-child(3) { width: 122px; }
  th:last-child { border: 0; }
  th svg { position: absolute; left: 130px; top: -3px; }
  td { height: 25px; padding: 0 0 0 5px; font-size: 10px; color: #777; white-space: nowrap; }
  tbody { border-top: 6px solid #fff; background: #d9d9d9; }
  td:first-child { padding-left: 4px; color: #111; }
`;
const NameCell = styled.span`
  display: flex;
  align-items: center;
  gap: 4px;
`;
const HScroll = styled.div`
  height: 15px;
  margin-top: auto;
  padding: 4px 32px 4px 16px;
  background: #f0f0f0;
  &::after { content: ''; display: block; height: 7px; background: #858585; }
`;
const ExStatus = styled.footer`
  display: flex;
  align-items: center;
  height: 22px;
  padding: 0 5px 0 13px;
  gap: 10px;
  font-size: 10px;
  color: #1f3a5f;
`;
const ViewButton = styled.button<{ $on?: boolean }>`
  display: grid;
  place-items: center;
  width: 20px;
  height: 21px;
  margin-left: ${p => (p.$on ? 0 : -10)}px;
  border: 1px solid ${p => (p.$on ? '#26a0da' : 'transparent')};
  background: ${p => (p.$on ? '#cce8f6' : 'transparent')};
  color: #111;
`;
const chev = <Line d="M4 6l4 4 4-4" size={9} w={1.5} color="#777" />;
const treeArt: [string, React.ReactNode][] = [
  ['Desktop', <path d="M0 2h16v12H0z" fill="#1fa6cf" />],
  ['Documents', <g><rect x="2" width="12" height="16" rx="1" fill="#7f9dbc" /><path d="M4 6h8M4 9h8M4 12h8" stroke="#fff" /></g>],
  ['Downloads', <path d="M8 1v10M4 7.500L8 11.500l4-4M2.500 15h11" stroke="#1bb394" fill="none" strokeWidth="1.500" />],
  ['Music', <g><circle cx="8" cy="8" r="8" fill="#d8706b" /><path d="M8 11V4l3 1.500" stroke="#fff" fill="none" strokeWidth="1.500" /><circle cx="6.500" cy="11" r="2" fill="#fff" /></g>],
  ['Pictures', <g><rect x="1" y="1" width="14" height="14" rx="1" fill="#1480cf" /><path d="M2 14l6-7 6 7z" fill="#fff" /><circle cx="11" cy="4.500" r="1.300" fill="#fff" /></g>],
  ['Videos', <g><rect x="1" width="14" height="16" rx="1" fill="#9a50e8" /><path d="M2.500 1v14M13.500 1v14" stroke="#5a2596" strokeWidth="1.500" strokeDasharray="2 2" /><path d="M6 5v6l5-3z" fill="#fff" /></g>],
  ['OSDisk (C:)', <g><path d="M1 0h3v3H1zM5 0h3v3H5zM1 4h3v3H1zM5 4h3v3H5z" fill="#1596e0" /><path d="M1 8h9v5H1z" fill="#444" /><path d="M9 4h6v8H9z" fill="#5ba8d4" /><path d="M11 4V1h3v3" stroke="#999" fill="none" /></g>],
  ['Backup (D:)', <g><path d="M3 4h10l2 4H1z" fill="#eee" /><path d="M1 8h14v5H1z" fill="#333" /><path d="M3 10h1.500v1.500H3z" fill="#4c4" /></g>],
  ['Network', <g><path d="M3 3h12v10H3z" fill="#1b96c8" /><circle cx="4" cy="4" r="4" fill="#79b6cf" /><path d="M6 15h6" stroke="#555" strokeWidth="1.500" /></g>],
];

const FileExplorer = () => (
  <Explorer>
    <ExTitle><FolderIcon />aio-lab-setup<Spacer />{['M3 8h10', 'M3.500 3.500h9v9h-9z', 'M3 3l10 10M13 3L3 13'].map(d => <WinButton key={d} $w={39} $color="#777"><Line d={d} size={14} w={1} /></WinButton>)}</ExTitle>
    <ExCommands>
      <Gap $w={6} />
      <ExCommand $w={82}><svg width="14" height="14" viewBox="0 0 14 14" fill="none"><circle cx="7" cy="7" r="6.300" stroke="#555" /><path d="M7 4v6M4 7h6" stroke="#0a78d4" strokeWidth="1.200" /></svg>New{chev}</ExCommand>
      <ExRule />
      <ExCommand $w={47} aria-label="Cut"><svg width="14" height="16" viewBox="0 0 14 16" fill="none"><path d="M3 1l6.500 10M11 1L4.500 11" stroke="#555" /><circle cx="3.500" cy="12.500" r="2.300" stroke="#0a78d4" strokeWidth="1.200" /><circle cx="10.500" cy="12.500" r="2.300" stroke="#0a78d4" strokeWidth="1.200" /></svg></ExCommand>
      <ExCommand $w={43} aria-label="Copy"><svg width="14" height="16" viewBox="0 0 14 16" fill="none"><path d="M3 3.500v9Q3 15 5.500 15H9" stroke="#555" /><rect x="4.500" y="1" width="8" height="12" rx="1.500" stroke="#0a78d4" strokeWidth="1.300" /></svg></ExCommand>
      <ExCommand $w={43} aria-label="Paste"><svg width="14" height="16" viewBox="0 0 14 16" fill="none"><path d="M6 15H1V2.500h10V5M4 1h4v2.500H4z" stroke="#c0c0c0" /><rect x="6.500" y="6" width="6.500" height="9" rx="1" stroke="#9dcbe9" strokeWidth="1.200" /></svg></ExCommand>
      <ExCommand $w={43} aria-label="Rename"><svg width="15" height="16" viewBox="0 0 15 16" fill="none"><path d="M8 3.500H1v9h7M12 3.500h2v9h-2" stroke="#555" /><path d="M10 1v14M8.500 1h3M8.500 15h3" stroke="#0a78d4" /><path d="M3 8h4.500" stroke="#0a78d4" strokeWidth="2" /></svg></ExCommand>
      <ExCommand $w={43} aria-label="Share"><svg width="14" height="16" viewBox="0 0 14 16" fill="none"><path d="M5 4H1v11h11v-4" stroke="#bbb" /><path d="M4 11q1-5 5-5V3l4.500 4.500L9 11V8.500q-3 0-5 2.500z" stroke="#9dcbe9" /></svg></ExCommand>
      <ExCommand $w={43} aria-label="Delete"><svg width="14" height="16" viewBox="0 0 14 16" fill="none" stroke="#555"><path d="M1 3h12M5 3V1h4v2M2.500 3L3.500 15h7l1-12M5.700 6v6M8.300 6v6" /></svg></ExCommand>
      <ExRule />
      <ExCommand $w={84}><svg width="14" height="14" viewBox="0 0 14 14" fill="none"><path d="M4 13V1.500M1 4.500l3-3 3 3" stroke="#555" /><path d="M10 1v11.500M7 9.500l3 3 3-3" stroke="#0a78d4" strokeWidth="1.200" /></svg>Sort{chev}</ExCommand>
      <ExCommand $w={80}><Line d="M1 3h14M1 6.500h14M1 10h14M1 13.500h14" size={14} w={1.2} />View{chev}</ExCommand>
      <ExRule />
      <ExCommand $w={46} aria-label="More"><svg width="14" height="4" viewBox="0 0 14 4" fill="#222"><circle cx="2" cy="2" r="1.400" /><circle cx="7" cy="2" r="1.400" /><circle cx="12" cy="2" r="1.400" /></svg></ExCommand>
    </ExCommands>
    <ExAddress>
      <ExCommand $w={32} aria-label="Back"><Line d="M14 8H2M7 3L2 8l5 5" size={13} /></ExCommand>
      <ExCommand $w={32} aria-label="Forward"><Line d="M2 8h12M9 3l5 5-5 5" size={13} color="#aaa" /></ExCommand>
      <ExCommand $w={24} aria-label="Recent">{chev}</ExCommand>
      <ExCommand $w={29} aria-label="Up"><Line d="M8 14V2M3 7l5-5 5 5" size={13} /></ExCommand>
      <ExPath><FolderIcon size={15} /><span>«</span><span>Back...</span><span>›</span><span>aio-lab-set...</span><Spacer /><Line d="M2 5l6 6 6-6" size={11} /><Gap $w={4} /><Line d="M13 4A6.300 6.300 0 1014.300 8M13.500 1v3.500H10" size={14} /></ExPath>
      <ExSearch><Line d="M6 10l-5 5M10 1.500a4.500 4.500 0 100 9 4.500 4.500 0 100-9" size={13} /><input aria-label="Search folder" placeholder="Search aio-lab-setup" /></ExSearch>
    </ExAddress>
    <ExBody>
      <ExTree>
        {treeArt.map(([n, art]) => (
          <ExNode key={n} $on={n === 'Backup (D:)'} $root={n === 'Network'}><Line d="M6 3l5 5-5 5" size={11} w={1.3} color="#888" /><svg width="14" height="14" viewBox="0 0 16 16">{art}</svg>{n}</ExNode>
        ))}
      </ExTree>
      <ExScroll />
      <ExPane>
        <ExTable>
          <thead><tr><th>Name<Line d="M4 10l4-4 4 4" size={11} color="#666" /></th><th>Date modified</th><th>Type</th><th>Size</th></tr></thead>
          <tbody><tr><td><NameCell><FolderIcon />md</NameCell></td><td>9/28/2022 10:49 AM</td><td>File folder</td><td /></tr></tbody>
        </ExTable>
        <HScroll />
      </ExPane>
    </ExBody>
    <ExStatus>1 item<ExRule $h={10} />1 item selected<ExRule $h={10} /><Spacer /><ViewButton $on aria-label="Details view"><Line d="M2 3h12M2 6.500h12M2 10h12M2 13.500h12" size={12} /></ViewButton><ViewButton aria-label="Large icons view"><Line d="M3 1.500h10v9H3zM3 14h10" size={13} w={1.5} /></ViewButton></ExStatus>
  </Explorer>
);

const Browser = () => (
  <>
    <TabStrip>
      <StripButton $w={42} aria-label="Tab actions"><Line d="M2 3.500Q2 2 3.500 2h9Q14 2 14 3.500v9Q14 14 12.500 14h-9Q2 14 2 12.500zM2 5h12M6 5v9" size={14} w={1.5} /></StripButton>
      <Tabs>
        {tabData.map(([icon, name, dim, bg], i) => (
          <Tab key={i} $on={i === 14} $dim={dim}>
            <Fav $bg={bg}>{icon}</Fav>
            <TabName>{name}</TabName>
            <button aria-label="Close tab"><Line d="M3.500 3.500l9 9M12.500 3.500l-9 9" size={12} color="#333" /></button>
          </Tab>
        ))}
      </Tabs>
      <StripButton $w={31} aria-label="New tab"><Line d="M8 2v12M2 8h12" size={15} /></StripButton>
      <Gap $w={34} />
      {['M3 8h10', 'M4 3.500h8.500V12H4z', 'M3 3l10 10M13 3L3 13'].map(d => <WinButton key={d} $w={42} $color="#777"><Line d={d} size={14} w={1} /></WinButton>)}
    </TabStrip>
    <AddressRow>
      <AddressButton $w={46} aria-label="Back"><Line d="M15 8H1.500M7.500 2L1.500 8l6 6" size={15} /></AddressButton>
      <AddressButton aria-label="Reload"><Line d="M13 4A6.300 6.300 0 1014.300 8M13.500 1v3.500H10" size={15} /></AddressButton>
      <Url>
        <Line d="M3 6.500h10v8H3zM5.500 6.500V4a2.500 2.500 0 015 0v2.500M8 10.300v.4" size={14} />
        <input aria-label="Address" defaultValue="https://github.com/t-fsheng/aio-lab-setup" />
        <AddressButton $w={32} aria-label="Read aloud"><Line d="M1.500 14L6 2.500 10.500 14M3 10h6M11.500 3q1.500 1.500 1 4M14 1.500q2 2.500 1 6" size={15} /></AddressButton>
        <AddressButton $w={32} aria-label="Add to favorites"><Line d="M9.500 12L7 10.500l-4 2.300.8-4.500L.8 5l4.400-.7L7 .5l1.900 3.800L13.200 5l-2 2M12 9v6M9 12h6" size={15} /></AddressButton>
      </Url>
      <AddressButton aria-label="Favorites"><Line d="M7 11.500l-4 2.300.8-4.500L.8 6l4.400-.7L7 1.500l1.900 3.800M10 7.500h5.500M10 10.500h5.500M10 13.500h5.500" size={15} w={1.4} /></AddressButton>
      <AddressButton aria-label="Collections"><Line d="M5 5h9.500v10H5zM3 12L1.500 3.500 9 1.500M9.750 7.500v5M7.250 10h5" size={15} w={1.4} /></AddressButton>
      <AddressButton aria-label="Profile"><Profile><svg width="16" height="16" viewBox="0 0 16 16" fill="#8a8985"><circle cx="8" cy="5" r="3.300" /><path d="M2.500 14a5.500 4.500 0 0111 0l-5.500 2z" /></svg></Profile></AddressButton>
      <AddressButton aria-label="Settings and more"><svg width="14" height="4" viewBox="0 0 14 4" fill="#111"><circle cx="2" cy="2" r="1.300" /><circle cx="7" cy="2" r="1.300" /><circle cx="12" cy="2" r="1.300" /></svg></AddressButton>
      <Gap $w={7} />
    </AddressRow>
    <BrowserBody>
      <GitHub />
      <Scroll><ScrollEnd /><ScrollThumb /><ScrollEnd $down /></Scroll>
      <Rail>
        <RailTop>{railArt.map(([n, art]) => <button key={n} aria-label={n}><svg width="16" height="16" viewBox="0 0 16 16">{art}</svg></button>)}</RailTop>
        <RailEnd>
          <button aria-label="Hide sidebar"><Line d="M1.500 2.500h13v11h-13zM10 2.500v11M4 8h4M6.500 6l2 2-2 2" size={15} /></button>
          <button aria-label="Settings"><GoGear size={16} /></button>
        </RailEnd>
      </Rail>
    </BrowserBody>
  </>
);

export default function App() {
  return (
    <Screens>
      <Global />
      <div>
        <LeftScreen>
          <Joplin />
          <Taskbar />
        </LeftScreen>
      </div>
      <RightScreen>
        <Browser />
        <FileExplorer />
        <Taskbar small />
      </RightScreen>
    </Screens>
  );
}
